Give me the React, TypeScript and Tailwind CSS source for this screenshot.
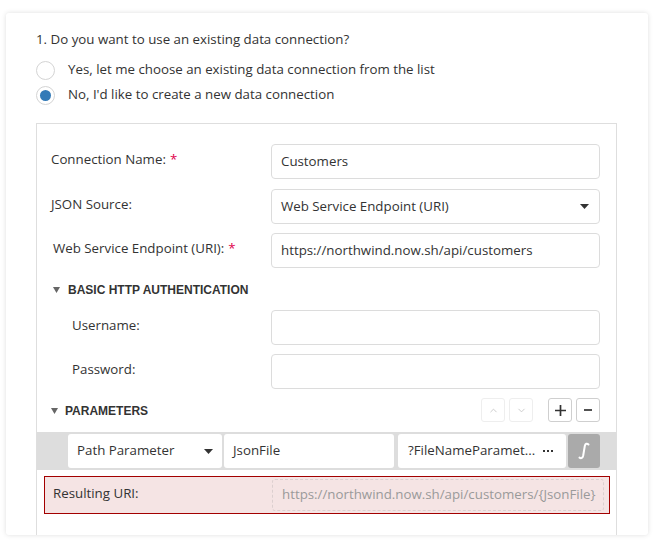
import { ChevronUp, ChevronDown } from 'lucide-react';

const font = { fontFamily: '"Open Sans", "Noto Sans", sans-serif' };
const bold = { fontFamily: '"Liberation Sans", Arial, sans-serif' };

function Caret({ className = '' }: { className?: string }) {
  return (
    <svg width="9" height="5" viewBox="0 0 9 5" className={className}>
      <path d="M0 0h9L4.5 5z" fill="#333" />
    </svg>
  );
}

function Tri({ className = '' }: { className?: string }) {
  return (
    <svg width="7" height="6" viewBox="0 0 7 6" className={className}>
      <path d="M0 0h7L3.5 6z" fill="#666" />
    </svg>
  );
}

function Req() {
  return <span className="text-[#e0004d] ml-1">*</span>;
}

function Field({ label, labelClass = '', value, select, mt }: { label: React.ReactNode; labelClass?: string; value?: string; select?: boolean; mt: string }) {
  return (
    <div className={`flex items-center ${mt}`}>
      <div className={`w-[220px] shrink-0 -mt-[3px] ${labelClass}`}>{label}</div>
      <div className="flex-1 h-[35px] border border-[#dcdcdc] rounded-[4px] bg-white flex items-center px-[9px] justify-between">
        <span>{value}</span>
        {select && <Caret className="mr-[1px]" />}
      </div>
    </div>
  );
}

export default function App() {
  return (
    <div className="w-[654px] h-[548px] bg-white overflow-hidden text-[13.3px] text-[#333]" style={font}>
      <div className="ml-[6px] mt-[13px] w-[642px] h-[522px] bg-white rounded-[3px] shadow-[0_0_5px_rgba(0,0,0,0.13)] pl-[30px] pr-[31px] pt-[16px] overflow-hidden">
        <div className="h-[20px] leading-[20px]">1. Do you want to use an existing data connection?</div>
        <div className="mt-[12px] flex flex-col gap-[7px]">
          <div className="flex items-center h-[18px]">
            <span className="w-[19px] h-[19px] rounded-full border border-[#d4d4d4] bg-white" />
            <span className="ml-[13px] -mt-[1px]">Yes, let me choose an existing data connection from the list</span>
          </div>
          <div className="flex items-center h-[18px]">
            <span className="w-[19px] h-[19px] rounded-full border border-[#d4d4d4] bg-white flex items-center justify-center">
              <span className="w-[11px] h-[11px] rounded-full bg-[#337ab7]" />
            </span>
            <span className="ml-[13px] -mt-[1px]">No, I'd like to create a new data connection</span>
          </div>
        </div>

        <div className="mt-[19px] border border-[#dedede] h-[420px] pt-[20px]">
          <div className="pl-[14px] pr-[16px]">
            <Field mt="" label={<>Connection Name:<Req /></>} value="Customers" />
            <Field mt="mt-[10px]" label="JSON Source:" value="Web Service Endpoint (URI)" select />
            <Field mt="mt-[9px]" labelClass="pl-[2px]" label={<>Web Service Endpoint (URI):<Req /></>} value="https://northwind.now.sh/api/customers" />

            <div className="mt-[13px] h-[18px] flex items-center font-bold text-[12px] pl-[2px]" style={bold}>
              <Tri />
              <span className="ml-[8px]">BASIC HTTP AUTHENTICATION</span>
            </div>

            <Field mt="mt-[11px]" labelClass="pl-[21px]" label="Username:" />
            <Field mt="mt-[9px]" labelClass="pl-[21px]" label="Password:" />
          </div>

          <div className="mt-[8px] pl-[14px] pr-[16px] flex items-center h-[26px]">
            <div className="flex items-center font-bold text-[12px] mt-[1px]" style={bold}>
              <Tri />
              <span className="ml-[7px]">PARAMETERS</span>
            </div>
            <div className="ml-auto flex items-center">
              <div className="w-[24px] h-[24px] border border-[#eeeeee] rounded-[3px] flex items-center justify-center">
                <ChevronUp size={11} color="#c8c8c8" strokeWidth={2} />
              </div>
              <div className="ml-[4px] w-[24px] h-[24px] border border-[#eeeeee] rounded-[3px] flex items-center justify-center">
                <ChevronDown size={11} color="#c8c8c8" strokeWidth={2} />
              </div>
              <div className="ml-[15px] w-[24px] h-[24px] border border-[#cfcfcf] rounded-[3px] flex items-center justify-center">
                <svg width="11" height="11" viewBox="0 0 11 11"><path d="M5.5 0v11M0 5.5h11" stroke="#333" strokeWidth="1.7" /></svg>
              </div>
              <div className="ml-[4px] w-[24px] h-[24px] border border-[#cfcfcf] rounded-[3px] flex items-center justify-center">
                <svg width="8" height="2" viewBox="0 0 8 2"><path d="M0 1h8" stroke="#333" strokeWidth="1.7" /></svg>
              </div>
            </div>
          </div>

          <div className="mt-[9px] h-[38px] bg-[#dddddd] flex items-center pl-[31px] pr-[16px] gap-[2px]">
            <div className="w-[154px] h-[34px] bg-white rounded-[3px] flex items-center justify-between pl-[9px] pr-[9px]">
              <span>Path Parameter</span>
              <Caret />
            </div>
            <div className="w-[170px] h-[34px] bg-white rounded-[3px] flex items-center pl-[9px]">JsonFile</div>
            <div className="w-[168px] h-[34px] bg-white rounded-[3px] flex items-center justify-between pl-[10px] pr-[13px] ml-[2px]">
              <span>?FileNameParamet...</span>
              <span className="flex gap-[2px]">
                <span className="w-[2px] h-[2px] bg-[#333]" />
                <span className="w-[2px] h-[2px] bg-[#333]" />
                <span className="w-[2px] h-[2px] bg-[#333]" />
              </span>
            </div>
            <div className="w-[32px] h-[34px] bg-[#aaaaaa] rounded-[3px] flex items-center justify-center">
              <svg width="12" height="18" viewBox="0 0 12 18">
                <path d="M10.5 2.5C9 1 7.3 1.5 6.8 4L5.2 13.5C4.7 16 3.2 16.8 1.5 15.6" fill="none" stroke="#fff" strokeWidth="2" strokeLinecap="round" />
              </svg>
            </div>
          </div>

          <div className="mt-[6px] ml-[7px] mr-[6px] h-[38px] border border-[#a30000] bg-[#f5e4e4] flex items-center pl-[8px] pr-[5px]">
            <div className="w-[219px] shrink-0 -mt-[2px]">Resulting URI:</div>
            <div className="flex-1 h-[32px] border border-dashed border-[#dccfcf] rounded-[3px] flex items-center pl-[9px] text-[#9a9a9a]">
              https://northwind.now.sh/api/customers/{'{'}JsonFile{'}'}
            </div>
          </div>
        </div>
      </div>
    </div>
  );
}
